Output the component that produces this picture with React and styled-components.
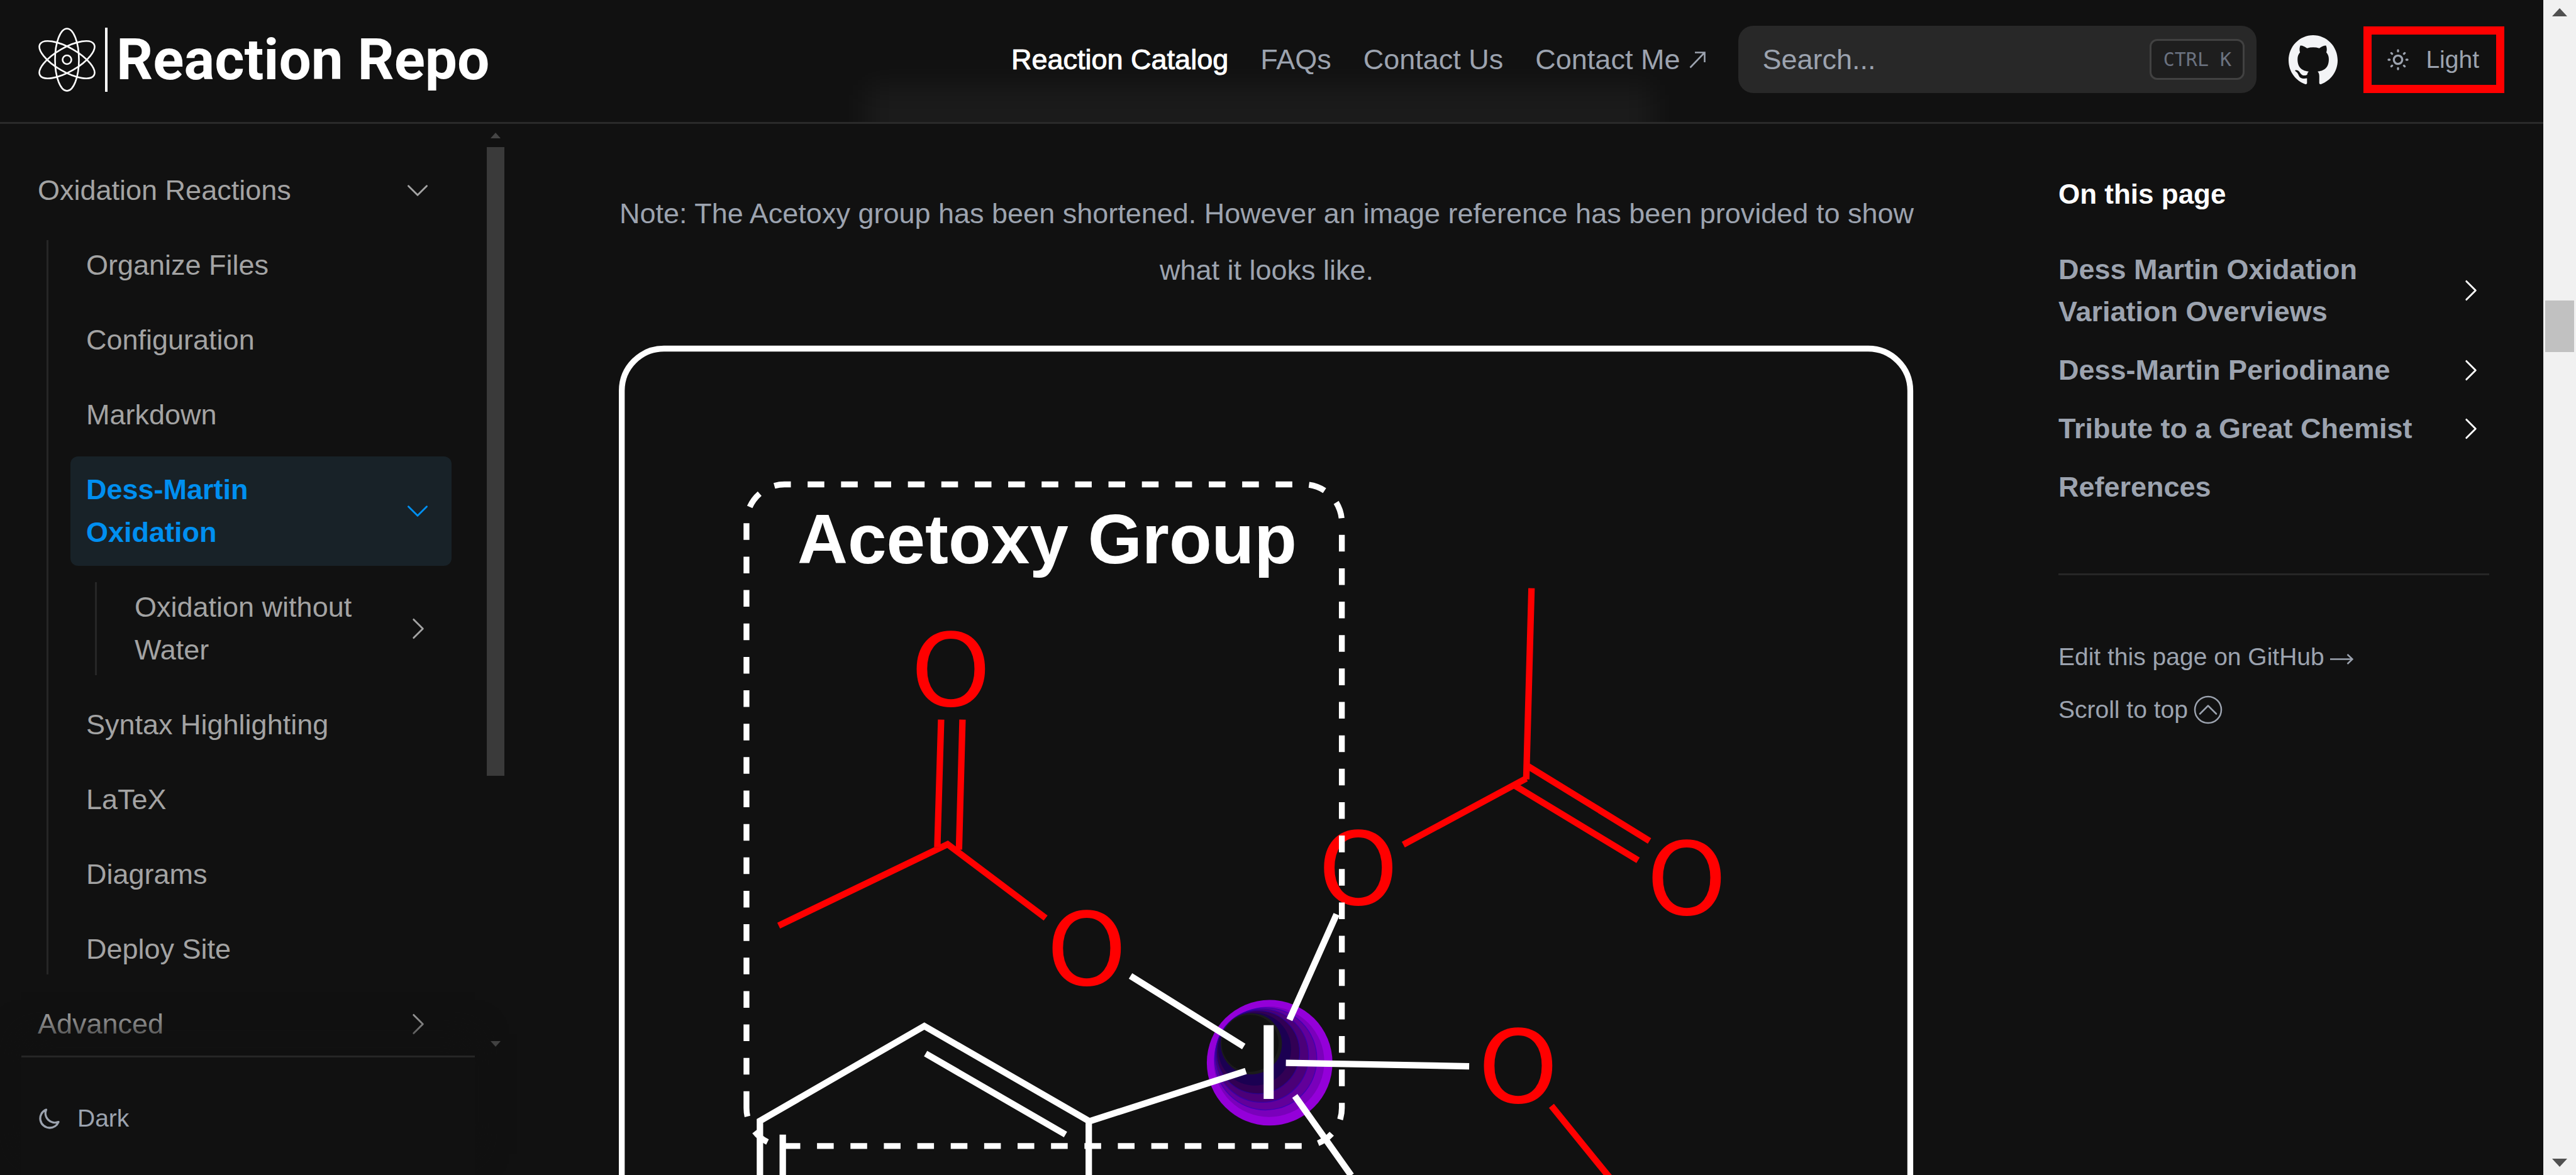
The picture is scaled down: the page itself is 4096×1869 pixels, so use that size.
import React from "react";
import styled, { createGlobalStyle, css } from "styled-components";

const color = {
  bg: "#111111",
  text: "#9ca3af",
  side: "#a3a3a3",
  bright: "#ffffff",
  line: "#262626",
  accent: "#008ff0",
};

const GlobalStyle = createGlobalStyle`
  * { box-sizing: border-box; }
  html, body { margin: 0; background: ${color.bg}; }
  body {
    font-family: "Liberation Sans", Arial, sans-serif;
    font-size: 45px;
    color: ${color.text};
    overflow: hidden;
  }
  a { color: inherit; text-decoration: none; }
  ul { list-style: none; margin: 0; padding: 0; }
  button { font: inherit; color: inherit; background: none; border: 0; padding: 0; margin: 0; cursor: pointer; }
`;

const Shell = styled.div`
  display: flex;
  height: 100vh;
  overflow: hidden;
`;

const Page = styled.div`
  flex: 1;
  min-width: 0;
  display: flex;
  flex-direction: column;
`;

/* ---------- header ---------- */

const Header = styled.header`
  position: relative;
  flex: none;
  display: flex;
  align-items: center;
  height: 197px;
  padding: 0 62px 5px 59px;
  border-bottom: 3px solid #2a2a2a;
  overflow: hidden;
`;

const HeaderGlow = styled.div`
  position: absolute;
  left: 34%;
  right: 35%;
  top: 135px;
  height: 100px;
  background: rgba(255, 255, 255, 0.045);
  filter: blur(24px);
`;

const Logo = styled.a`
  position: relative;
  display: flex;
  align-items: center;
  margin-right: auto;
  color: #fff;
`;

const LogoRule = styled.span`
  width: 4px;
  height: 102px;
  margin: 0 14px 0 13px;
  background: #fff;
`;

const LogoText = styled.span`
  font-family: Roboto, "Liberation Sans", sans-serif;
  font-size: 91px;
  line-height: 102px;
  font-weight: 700;
`;

const Nav = styled.nav`
  position: relative;
  display: flex;
  gap: 51px;
  margin-right: 52px;
`;

const NavLink = styled.a`
  display: flex;
  align-items: center;
  gap: 15px;
  line-height: 68px;
  white-space: nowrap;
  color: ${(p) => (p.$current ? color.bright : color.text)};
  -webkit-text-stroke: ${(p) => (p.$current ? "1px currentColor" : "0")};
`;

const Search = styled.label`
  display: flex;
  align-items: center;
  width: 824px;
  height: 107px;
  padding: 0 19px 0 38px;
  border-radius: 24px;
  background: #282828;
`;

const SearchInput = styled.input`
  flex: 1;
  min-width: 0;
  height: 68px;
  padding: 0;
  border: 0;
  outline: 0;
  background: none;
  font: inherit;
  color: ${color.bright};
  &::placeholder { color: ${color.text}; opacity: 1; }
`;

const Kbd = styled.kbd`
  display: flex;
  align-items: center;
  justify-content: center;
  width: 151px;
  height: 65px;
  border: 3px solid #414141;
  border-radius: 12px;
  background: #1e1e1e;
  color: #6b7280;
  font-family: "DejaVu Sans Mono", monospace;
  font-size: 30px;
`;

const IconLink = styled.a`
  display: flex;
  margin: 0 41px 0 51px;
  color: #f3f4f6;
`;

const ThemeButton = styled.button`
  display: flex;
  align-items: center;
  gap: 24px;
  font-size: 39px;
  line-height: 56px;
`;

const HighlightedThemeButton = styled(ThemeButton)`
  height: 106px;
  padding: 0 27px 0 22px;
  border: 13px solid #ff0000;
`;

/* ---------- body columns ---------- */

const Columns = styled.div`
  flex: 1;
  min-height: 0;
  display: flex;
`;

const Sidebar = styled.aside`
  flex: none;
  width: 802px;
  display: flex;
  flex-direction: column;
  color: ${color.side};
`;

const SideScroll = styled.div`
  flex: 1;
  min-height: 0;
  display: flex;
`;

const Tree = styled.div`
  flex: 1;
  min-width: 0;
  padding: 53px 56px 0 35px;
  overflow: hidden;
`;

const TreeList = styled.ul`
  display: flex;
  flex-direction: column;
  gap: 13px;
`;

const SubList = styled(TreeList)`
  position: relative;
  margin: 13px 0 0 39px;
  padding-left: 38px;
  &::before {
    content: "";
    position: absolute;
    left: 0;
    top: 13px;
    bottom: 13px;
    width: 3px;
    background: ${color.line};
  }
`;

const rowStyle = css`
  display: flex;
  align-items: center;
  justify-content: space-between;
  gap: 30px;
  width: 100%;
  padding: 19px 29px 19px 25px;
  border-radius: 12px;
  line-height: 68px;
  text-align: left;
`;

const TreeLink = styled.a`${rowStyle}`;

const TreeFolder = styled.button`
  ${rowStyle}
  ${(p) =>
    p.$active &&
    css`
      background: #182228;
      color: ${color.accent};
      font-weight: 700;
    `}
`;

const SideFooter = styled.div`
  position: relative;
  flex: none;
  margin: 0 47px 0 34px;
  padding: 69px 25px 62px;
  border-top: 3px solid ${color.line};
  background: ${color.bg};
  box-shadow: 0 -34px 45px ${color.bg};
  color: ${color.text};
`;

const Main = styled.main`
  flex: 1;
  min-width: 0;
  padding: 98px 229px 0 182px;
  overflow: hidden;
`;

const Note = styled.p`
  margin: 0 0 73px;
  line-height: 90px;
  text-align: center;
`;

const Figure = styled.figure`
  margin: 0;
  svg { display: block; width: 100%; height: auto; }
`;

const Toc = styled.nav`
  flex: none;
  width: 771px;
  padding: 78px 86px 0 0;
`;

const TocTitle = styled.h2`
  margin: 0 0 53px;
  font-size: 44px;
  line-height: 67px;
  font-weight: 700;
  color: ${color.bright};
`;

const TocList = styled.ul`
  display: flex;
  flex-direction: column;
  gap: 26px;
`;

const TocLink = styled.a`
  display: flex;
  align-items: center;
  justify-content: space-between;
  gap: 30px;
  padding-right: 5px;
  line-height: 67px;
  font-weight: 700;
  svg { color: #fff; }
`;

const TocFooter = styled.div`
  display: flex;
  flex-direction: column;
  align-items: flex-start;
  gap: 28px;
  margin-top: 104px;
  padding-top: 102px;
  border-top: 3px solid ${color.line};
  font-size: 39px;
  line-height: 56px;
`;

const EditLink = styled.a`
  display: flex;
  align-items: center;
  gap: 9px;
`;

const ScrollTop = styled.button`
  display: flex;
  align-items: center;
  gap: 9px;
`;

/* ---------- scrollbars ---------- */

const Track = styled.div`
  flex: none;
  display: flex;
  flex-direction: column;
  width: ${(p) => (p.$window ? 52 : 28)}px;
  padding: 0 ${(p) => (p.$window ? 3 : 0)}px;
  background: ${(p) => (p.$window ? "#f1f1f1" : "transparent")};
`;

const TrackEnd = styled.div`
  flex: none;
  display: flex;
  align-items: center;
  justify-content: center;
  height: ${(p) => (p.$window ? 39 : 37)}px;
`;

const TrackRun = styled.div`
  flex: 1;
  display: flex;
  flex-direction: column;
`;

const Thumb = styled.div`
  height: ${(p) => p.$size}%;
  background: ${(p) => (p.$window ? "#c1c1c1" : "#3a3a3a")};
`;

const ThumbSpace = styled.div`
  height: ${(p) => p.$size}%;
`;

/* ---------- icons ---------- */

const Svg = styled.svg`
  flex: none;
  display: block;
`;

const Chevron = ({ down }) => (
  <Svg width="50" height="50" viewBox="0 0 24 24" fill="none" stroke="currentColor" strokeWidth="1.4" strokeLinecap="round" strokeLinejoin="round" aria-hidden="true">
    <path d={down ? "M5 8.5l7 7 7-7" : "M9 5l7 7-7 7"} />
  </Svg>
);

const Atom = () => (
  <Svg width="95" height="104" viewBox="-47.5 -52 95 104" fill="none" stroke="currentColor" strokeWidth="2.6" aria-hidden="true">
    <ellipse rx="19" ry="49.5" />
    <ellipse rx="19" ry="49.5" transform="rotate(60)" />
    <ellipse rx="19" ry="49.5" transform="rotate(-60)" />
    <circle r="7" />
  </Svg>
);

const GitHub = () => (
  <Svg width="78" height="78" viewBox="3 3 18 18" fill="currentColor" aria-hidden="true">
    <path d="M12 3C7.0275 3 3 7.12937 3 12.2276C3 16.3109 5.57625 19.7597 9.15374 20.9824C9.60374 21.0631 9.77249 20.7863 9.77249 20.5441C9.77249 20.3249 9.76125 19.5982 9.76125 18.8254C7.5 19.2522 6.915 18.2602 6.735 17.7412C6.63375 17.4759 6.19499 16.6569 5.8125 16.4378C5.4975 16.2647 5.0475 15.838 5.80124 15.8264C6.51 15.8149 7.01625 16.4954 7.18499 16.7723C7.99499 18.1679 9.28875 17.7758 9.80625 17.5335C9.885 16.9337 10.1212 16.53 10.38 16.2993C8.3775 16.0687 6.285 15.2728 6.285 11.7432C6.285 10.7397 6.63375 9.9092 7.20749 9.26326C7.1175 9.03257 6.8025 8.08674 7.2975 6.81794C7.2975 6.81794 8.05125 6.57571 9.77249 7.76377C10.4925 7.55615 11.2575 7.45234 12.0225 7.45234C12.7875 7.45234 13.5525 7.55615 14.2725 7.76377C15.9937 6.56418 16.7475 6.81794 16.7475 6.81794C17.2424 8.08674 16.9275 9.03257 16.8375 9.26326C17.4113 9.9092 17.76 10.7281 17.76 11.7432C17.76 15.2843 15.6563 16.0687 13.6537 16.2993C13.98 16.5877 14.2613 17.1414 14.2613 18.0065C14.2613 19.2407 14.25 20.2326 14.25 20.5441C14.25 20.7863 14.4188 21.0746 14.8688 20.9824C16.6554 20.364 18.2079 19.1866 19.3078 17.6162C20.4077 16.0457 20.9995 14.1611 21 12.2276C21 7.12937 16.9725 3 12 3Z" />
  </Svg>
);

const Sun = () => (
  <Svg width="40" height="40" viewBox="0 0 24 24" fill="none" stroke="currentColor" strokeWidth="2" strokeLinecap="round" strokeLinejoin="round" aria-hidden="true">
    <path d="M12 3v1m0 16v1m9-9h-1M4 12H3m15.364 6.364l-.707-.707M6.343 6.343l-.707-.707m12.728 0l-.707.707M6.343 17.657l-.707.707M16 12a4 4 0 11-8 0 4 4 0 018 0z" />
  </Svg>
);

const Moon = () => (
  <Svg width="40" height="40" viewBox="0 0 24 24" fill="none" stroke="currentColor" strokeWidth="2" strokeLinecap="round" strokeLinejoin="round" aria-hidden="true">
    <path d="M20.354 15.354A9 9 0 018.646 3.646 9.003 9.003 0 0012 21a9.003 9.003 0 008.354-5.646z" />
  </Svg>
);

const CircleUp = () => (
  <Svg width="46" height="46" viewBox="0 0 46 46" fill="none" stroke="currentColor" strokeWidth="2.5" strokeLinecap="round" strokeLinejoin="round" aria-hidden="true">
    <circle cx="23" cy="23" r="21" />
    <path d="M10 29.5L23 16.5 36 29.5" />
  </Svg>
);

const OutArrow = () => (
  <Svg width="26" height="28" viewBox="0 0 26 28" fill="none" stroke="currentColor" strokeWidth="2.6" aria-hidden="true">
    <path d="M1.5 26.5L24 3M9 2.5H24.5V18" />
  </Svg>
);

const RightArrow = () => (
  <Svg width="37" height="24" viewBox="0 0 37 24" fill="none" stroke="currentColor" strokeWidth="2.4" aria-hidden="true">
    <path d="M0 15.5H35M27.5 8L35.5 15.5 27.5 23" />
  </Svg>
);

const Arrow = ({ down, big }) => (
  <Svg width={big ? 24 : 16} height={big ? 13 : 9} viewBox="0 0 24 13" preserveAspectRatio="none" fill={big ? "#505050" : "#454545"} aria-hidden="true">
    <path d={down ? "M0 0h24L12 13z" : "M0 13h24L12 0z"} />
  </Svg>
);

/* ---------- molecule ---------- */

const oxygens = [
  [1624, 1141],
  [1856, 1618],
  [2320, 1480],
  [2881, 1497],
  [2593, 1819],
];

const redBonds =
  "M1607.5 1227L1601 1445M1644 1227L1638 1449M1330 1579L1618.6 1440L1786 1566" +
  "M2397 1440.6L2607 1327.5M2616 1002.5L2607 1329M2608.5 1305.6L2817.5 1434.2M2587 1339.5L2798 1467.4M2650 1887L2767 2031";

const whiteBonds =
  "M1931 1665L2124.5 1785.5M2283 1559.6L2202.5 1740M2196.4 1813.4L2509.5 1819.3M2128 1827.4L1859.7 1913.6" +
  "M2211.7 1870L2308 2006M1298 2100V1912.7L1578.8 1750.6L1859.7 1912.7V2100M1581 1797.6L1820 1936M1337 1936V2100";

const shades = [
  [386, 370, 322, "#9400d9"],
  [383, 365, 283, "#7a00bb"],
  [366, 350, 262, "#62009a", "#3d00b4"],
  [347, 334, 239, "#4b0078", "#3500a8"],
  [327, 316, 213, "#320054", "#270090"],
  [309, 300, 187, "#1b0052"],
  [292, 273, 157, "#1b1b1b"],
  [286, 270, 146, "#111111"],
];

const Molecule = () => (
  <svg viewBox="1057 586 2213 1500" role="img" aria-label="Structure of the Dess-Martin periodinane" fontFamily="'DejaVu Sans', sans-serif">
    <rect x="1062" y="593" width="2201" height="1700" rx="72" fill="none" stroke="#fff" strokeWidth="10" />
    <g transform="translate(2040 1690) scale(.3333)">
      {shades.map(([x, y, r, fill, edge]) => (
        <circle key={r} cx={x} cy={y} r={r} fill={fill} stroke={edge} strokeWidth={edge ? 4 : 0} />
      ))}
    </g>
    <g fill="#f00" fontSize="173" textAnchor="middle">
      {oxygens.map(([x, y]) => (
        <text key={x} x={x} y={y + 63}>O</text>
      ))}
    </g>
    <path d={redBonds} fill="none" stroke="#f00" strokeWidth="11" />
    <path
      d="M1275 1890.6V890A65 65 0 0 1 1340 825H2227A65 65 0 0 1 2292 890V1890.6A65 65 0 0 1 2227 1955.6H1340A65 65 0 0 1 1275 1890.6"
      fill="none"
      stroke="#fff"
      strokeWidth="10"
      strokeDasharray="28.5 28.6"
    />
    <path d={whiteBonds} fill="none" stroke="#fff" strokeWidth="11" />
    <text x="2167" y="1875" fill="#fff" fontSize="173" textAnchor="middle">I</text>
    <text x="1362" y="960" fill="#fff" fontSize="119" fontWeight="700" fontFamily="'Liberation Sans', Arial, sans-serif">Acetoxy Group</text>
  </svg>
);

/* ---------- page ---------- */

const Leaf = ({ children }) => (
  <li>
    <TreeLink href="#">{children}</TreeLink>
  </li>
);

const toc = [
  ["Dess Martin Oxidation Variation Overviews", true],
  ["Dess-Martin Periodinane", true],
  ["Tribute to a Great Chemist", true],
  ["References", false],
];

export default function App() {
  return (
    <Shell>
      <GlobalStyle />
      <Page>
        <Header>
          <HeaderGlow />
          <Logo href="#">
            <Atom />
            <LogoRule />
            <LogoText>Reaction Repo</LogoText>
          </Logo>
          <Nav aria-label="Main">
            <NavLink href="#" $current>Reaction Catalog</NavLink>
            <NavLink href="#">FAQs</NavLink>
            <NavLink href="#">Contact Us</NavLink>
            <NavLink href="#">
              Contact Me
              <OutArrow />
            </NavLink>
          </Nav>
          <Search>
            <SearchInput type="text" placeholder="Search..." aria-label="Search" />
            <Kbd>CTRL K</Kbd>
          </Search>
          <IconLink href="#" aria-label="GitHub">
            <GitHub />
          </IconLink>
          <HighlightedThemeButton type="button">
            <Sun />
            Light
          </HighlightedThemeButton>
        </Header>
        <Columns>
          <Sidebar>
            <SideScroll>
              <Tree>
                <TreeList>
                  <li>
                    <TreeFolder type="button">
                      Oxidation Reactions
                      <Chevron down />
                    </TreeFolder>
                    <SubList>
                      <Leaf>Organize Files</Leaf>
                      <Leaf>Configuration</Leaf>
                      <Leaf>Markdown</Leaf>
                      <li>
                        <TreeFolder type="button" $active>
                          Dess-Martin Oxidation
                          <Chevron down />
                        </TreeFolder>
                        <SubList>
                          <li>
                            <TreeFolder type="button">
                              Oxidation without Water
                              <Chevron />
                            </TreeFolder>
                          </li>
                        </SubList>
                      </li>
                      <Leaf>Syntax Highlighting</Leaf>
                      <Leaf>LaTeX</Leaf>
                      <Leaf>Diagrams</Leaf>
                      <Leaf>Deploy Site</Leaf>
                    </SubList>
                  </li>
                  <li>
                    <TreeFolder type="button">
                      Advanced
                      <Chevron />
                    </TreeFolder>
                  </li>
                </TreeList>
              </Tree>
              <Track>
                <TrackEnd><Arrow /></TrackEnd>
                <TrackRun><Thumb $size={71} /></TrackRun>
                <TrackEnd><Arrow down /></TrackEnd>
              </Track>
            </SideScroll>
            <SideFooter>
              <ThemeButton type="button">
                <Moon />
                Dark
              </ThemeButton>
            </SideFooter>
          </Sidebar>
          <Main>
            <Note>
              Note: The Acetoxy group has been shortened. However an image reference has been provided to show what it
              looks like.
            </Note>
            <Figure>
              <Molecule />
            </Figure>
          </Main>
          <Toc aria-label="On this page">
            <TocTitle>On this page</TocTitle>
            <TocList>
              {toc.map(([label, more]) => (
                <li key={label}>
                  <TocLink href="#">
                    {label}
                    {more && <Chevron />}
                  </TocLink>
                </li>
              ))}
            </TocList>
            <TocFooter>
              <EditLink href="#">
                Edit this page on GitHub
                <RightArrow />
              </EditLink>
              <ScrollTop type="button">
                Scroll to top
                <CircleUp />
              </ScrollTop>
            </TocFooter>
          </Toc>
        </Columns>
      </Page>
      <Track $window>
        <TrackEnd $window><Arrow big /></TrackEnd>
        <TrackRun>
          <ThumbSpace $size={24.5} />
          <Thumb $window $size={4.6} />
        </TrackRun>
        <TrackEnd $window><Arrow big down /></TrackEnd>
      </Track>
    </Shell>
  );
}
